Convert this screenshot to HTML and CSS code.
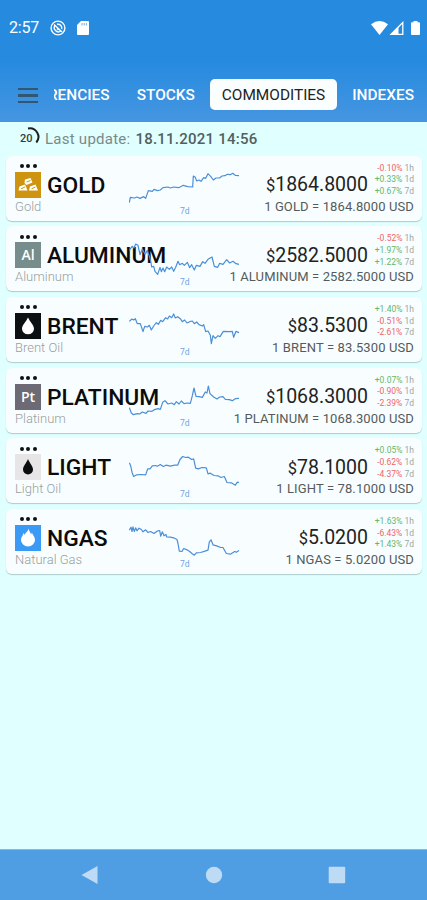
FILE: index.html
```html
<!DOCTYPE html>
<html lang="en">
<head>
    <meta charset="UTF-8">
    <meta name="viewport" content="width=device-width, initial-scale=1.0">
    <title>Commodities</title>
    <link rel="stylesheet" href="styles.css">
</head>
<body>
    <header class="header">
        <div class="status-bar">
            <span class="time">2:57</span>
            <svg class="status-icon" width="16" height="16" viewBox="0 0 16 16" fill="none" stroke="#fff">
                <circle cx="8" cy="8" r="6.9" stroke-width="1.4"/>
                <path d="M5.300 5.300A3.900 3.900 0 0 0 10.800 10.800M7 4.300A3.900 3.900 0 0 1 11.700 9" stroke-width="1.4"/>
                <path d="M4 4.500l8 7.500M7 8.500l1.500 1.500" stroke-width="1.4"/>
            </svg>
            <svg class="sd-icon" width="12" height="14" viewBox="0 0 12 14">
                <path d="M4 0h7a1 1 0 0 1 1 1v12a1 1 0 0 1-1 1H1a1 1 0 0 1-1-1V4z" fill="#fff"/>
                <path d="M5 2v2.5M7.2 2v2.5M9.4 2v2.5" stroke="#6fb0ea" stroke-width="1"/>
            </svg>
            <div class="status-right">
                <svg width="17" height="14" viewBox="0 0 17 14"><path d="M0 3.2Q8.500-3 17 3.200L8.500 14z" fill="#fff"/></svg>
                <svg width="15" height="14" viewBox="0 0 15 14">
                    <path d="M13.800 1.500V13.300H2z" fill="none" stroke="#fff" stroke-width="1.300"/>
                    <path d="M1 14L9.500 5.500V14z" fill="#fff"/>
                </svg>
                <svg class="battery" width="9" height="14" viewBox="0 0 9 14"><path d="M2.500 1.200V0h4v1.200H8a1 1 0 0 1 1 1V13a1 1 0 0 1-1 1H1a1 1 0 0 1-1-1V2.200a1 1 0 0 1 1-1z" fill="#fff"/></svg>
            </div>
        </div>
        <nav class="toolbar">
            <button class="menu-btn" aria-label="Menu"><span></span><span></span><span></span></button>
            <div class="tabs">
                <a class="tab">CURRENCIES</a>
                <a class="tab">STOCKS</a>
                <a class="tab is-active">COMMODITIES</a>
                <a class="tab">INDEXES</a>
            </div>
        </nav>
    </header>

    <main class="content">
        <div class="update">
            <div class="timer">
                <span>20</span>
                <svg width="20" height="20" viewBox="0 0 20 20"><path d="M7 1.500A8.600 8.600 0 0 1 15.300 15.500" fill="none" stroke="#1c2222" stroke-width="2"/></svg>
            </div>
            <span class="update-label">Last update:</span>
            <span class="update-date">18.11.2021 14:56</span>
        </div>

        <section class="list">
            <article class="card">
                <div class="asset">
                    <div class="dots"><i></i><i></i><i></i></div>
                    <div class="asset-row">
                        <svg class="logo" viewBox="0 0 26 26">
                            <path d="M0 0h26v26H0z" fill="#cf940f"/>
                            <g fill="#fff"><path d="M10 7.500l5.500-1.500 2 4.500-6 2.500-2-2zM4.500 14.500l5.500-2 2.500 6h-9zM15 14.500l5.500-2 2.500 6h-9z"/></g>
                            <path d="M11.500 10l4-1.500M6 16.800l4-1.800M16.500 16.800l4-1.800" stroke="#cf940f"/>
                        </svg>
                        <h2>GOLD</h2>
                    </div>
                    <p>Gold</p>
                </div>
                <div class="chart">
                    <svg viewBox="27 0 333 138"><polyline points="28,128 31,112 44,114 51,111 60,115 71,110 77,115 85,92 97,94 102,88 112,92 121,90 129,83 144,81 151,84 161,81 176,83 190,76 203,80 218,81 220,48 226,52 230,63 237,60 243,64 251,53 257,55 264,41 272,49 280,60 288,54 299,54 306,48 315,47 322,43 331,44 338,40 346,46 357,47"/></svg>
                    <span>7d</span>
                </div>
                <div class="quote">
                    <div class="price"><small>$</small>1864.8000</div>
                    <ul class="changes">
                        <li><b class="down">-0.10%</b> 1h</li>
                        <li><b class="up">+0.33%</b> 1d</li>
                        <li><b class="up">+0.67%</b> 7d</li>
                    </ul>
                    <div class="rate">1 GOLD = 1864.8000 USD</div>
                </div>
            </article>

            <article class="card">
                <div class="asset">
                    <div class="dots"><i></i><i></i><i></i></div>
                    <div class="asset-row">
                        <div class="logo logo-al">Al</div>
                        <h2>ALUMINUM</h2>
                    </div>
                    <p>Aluminum</p>
                </div>
                <div class="chart">
                    <svg viewBox="27 212 333 138"><polyline points="28,270 36,258 42,263 47,251 54,255 60,283 67,266 75,282 82,270 88,288 92,302 95,320 101,318 105,333 113,342 120,321 124,334 129,323 134,334 140,320 148,327 155,320 161,333 167,321 174,303 179,313 187,309 193,315 202,306 209,322 215,313 223,329 229,315 240,318 248,304 255,309 264,297 276,290 283,318 293,321 299,309 309,312 320,298 329,308 339,303 348,310 357,312"/></svg>
                    <span>7d</span>
                </div>
                <div class="quote">
                    <div class="price"><small>$</small>2582.5000</div>
                    <ul class="changes">
                        <li><b class="down">-0.52%</b> 1h</li>
                        <li><b class="up">+1.97%</b> 1d</li>
                        <li><b class="up">+1.22%</b> 7d</li>
                    </ul>
                    <div class="rate">1 ALUMINUM = 2582.5000 USD</div>
                </div>
            </article>

            <article class="card">
                <div class="asset">
                    <div class="dots"><i></i><i></i><i></i></div>
                    <div class="asset-row">
                        <svg class="logo" viewBox="0 0 26 26">
                            <path d="M0 0h26v26H0z" fill="#0b1013"/>
                            <path d="M13 4.500C11 9 7 12 7 15.800a6 5.500 0 0 0 12 0C19 12 15 9 13 4.500z" fill="#fff"/>
                        </svg>
                        <h2>BRENT</h2>
                    </div>
                    <p>Brent Oil</p>
                </div>
                <div class="chart">
                    <svg viewBox="27 4 333 138"><polyline points="28,65 36,58 41,61 46,57 52,72 61,72 69,96 74,80 82,82 88,77 94,91 101,79 109,69 115,74 122,62 128,66 137,54 143,58 148,49 155,54 161,43 166,55 173,51 181,57 187,66 194,61 201,70 209,66 217,64 223,72 230,67 237,75 247,79 251,75 257,96 264,94 271,107 274,132 279,108 286,116 294,108 300,111 310,95 330,96 337,95 341,113 348,95 357,99"/></svg>
                    <span>7d</span>
                </div>
                <div class="quote">
                    <div class="price"><small>$</small>83.5300</div>
                    <ul class="changes">
                        <li><b class="up">+1.40%</b> 1h</li>
                        <li><b class="down">-0.51%</b> 1d</li>
                        <li><b class="down">-2.61%</b> 7d</li>
                    </ul>
                    <div class="rate">1 BRENT = 83.5300 USD</div>
                </div>
            </article>

            <article class="card">
                <div class="asset">
                    <div class="dots"><i></i><i></i><i></i></div>
                    <div class="asset-row">
                        <div class="logo logo-pt">Pt</div>
                        <h2>PLATINUM</h2>
                    </div>
                    <p>Platinum</p>
                </div>
                <div class="chart">
                    <svg viewBox="27 216 333 138"><polyline points="28,323 34,339 40,344 52,341 59,342 67,336 78,340 84,333 96,334 103,329 114,326 121,328 128,307 135,302 144,312 155,309 163,314 169,305 177,312 184,303 192,311 202,309 211,310 217,287 222,264 228,289 237,290 247,292 256,276 261,279 265,258 270,281 281,291 291,297 299,291 309,290 316,298 328,299 337,302 346,296 357,295"/></svg>
                    <span>7d</span>
                </div>
                <div class="quote">
                    <div class="price"><small>$</small>1068.3000</div>
                    <ul class="changes">
                        <li><b class="up">+0.07%</b> 1h</li>
                        <li><b class="down">-0.90%</b> 1d</li>
                        <li><b class="down">-2.39%</b> 7d</li>
                    </ul>
                    <div class="rate">1 PLATINUM = 1068.3000 USD</div>
                </div>
            </article>

            <article class="card">
                <div class="asset">
                    <div class="dots"><i></i><i></i><i></i></div>
                    <div class="asset-row">
                        <svg class="logo" viewBox="0 0 26 26">
                            <path d="M0 0h26v26H0z" fill="#e7e5e6"/>
                            <path d="M13 5C11.500 9 8 12 8 15.500a5 5 0 0 0 10 0C18 12 14.500 9 13 5z" fill="#0b0d0e"/>
                        </svg>
                        <h2>LIGHT</h2>
                    </div>
                    <p>Light Oil</p>
                </div>
                <div class="chart">
                    <svg viewBox="27 2.500 333 138"><polyline points="28,62 32,71 36,90 41,103 50,98 63,97 77,98 83,80 90,80 97,71 106,70 112,72 121,67 130,73 138,69 151,72 164,69 173,69 180,52 188,43 197,46 205,45 215,52 221,50 227,78 235,80 246,76 259,77 264,95 271,93 282,100 294,101 303,106 313,103 321,121 334,122 346,129 352,120 357,121"/></svg>
                    <span>7d</span>
                </div>
                <div class="quote">
                    <div class="price"><small>$</small>78.1000</div>
                    <ul class="changes">
                        <li><b class="up">+0.05%</b> 1h</li>
                        <li><b class="down">-0.62%</b> 1d</li>
                        <li><b class="down">-4.37%</b> 7d</li>
                    </ul>
                    <div class="rate">1 LIGHT = 78.1000 USD</div>
                </div>
            </article>

            <article class="card">
                <div class="asset">
                    <div class="dots"><i></i><i></i><i></i></div>
                    <div class="asset-row">
                        <svg class="logo" viewBox="0 0 26 26">
                            <path d="M0 0h26v26H0z" fill="#3a9af5"/>
                            <path d="M13.500 3.500c.5 3 2 3.500 2.500 6l1-2c.5 2.500 3 4 3 7.500a7 6.500 0 0 1-14 0c0-3 2-4 2.500-7l1.200 2C10 7.500 13 7 13.500 3.500z" fill="#fff"/>
                        </svg>
                        <h2>NGAS</h2>
                    </div>
                    <p>Natural Gas</p>
                </div>
                <div class="chart">
                    <svg viewBox="27 214.500 333 138"><polyline points="28,266 33,257 36,270 39,256 43,270 47,259 51,268 57,260 64,264 69,271 77,265 84,273 92,270 102,276 111,269 119,267 122,284 127,271 132,283 138,279 140,286 151,287 161,289 171,294 174,306 178,329 186,330 191,321 201,325 209,330 216,336 223,341 229,334 242,333 255,329 264,326 268,301 273,295 279,310 290,313 302,318 309,318 319,336 331,338 344,330 349,332 357,327"/></svg>
                    <span>7d</span>
                </div>
                <div class="quote">
                    <div class="price"><small>$</small>5.0200</div>
                    <ul class="changes">
                        <li><b class="up">+1.63%</b> 1h</li>
                        <li><b class="down">-6.43%</b> 1d</li>
                        <li><b class="up">+1.43%</b> 7d</li>
                    </ul>
                    <div class="rate">1 NGAS = 5.0200 USD</div>
                </div>
            </article>
        </section>
    </main>

    <footer class="nav-bar">
        <svg width="18" height="18" viewBox="0 0 18 18"><path d="M.500 9L16.500 0v18z"/></svg>
        <svg width="18" height="18" viewBox="0 0 18 18"><circle cx="9" cy="9" r="8.200"/></svg>
        <svg width="18" height="18" viewBox="0 0 18 18"><rect x=".7" y=".7" width="16.500" height="16.500" rx="1"/></svg>
    </footer>
</body>
</html>
```

FILE: styles.css
```css
*,
*:before,
*:after {
    box-sizing: border-box;
}

body {
    margin: 0;
    height: 900px;
    display: flex;
    flex-direction: column;
    overflow: hidden;
    background-color: #e0ffff;
    font-family: Roboto, sans-serif;
}

svg {
    display: block;
}

.header {
    height: 122px;
    background: linear-gradient(#268adf 0, #268adf 60px, #4596e1 122px);
    color: #fff;
}

.status-bar {
    height: 41px;
    padding: 14px 7px 0 9px;
    display: flex;
    align-items: center;
}

.time {
    width: 41px;
    font-size: 16px;
    letter-spacing: -0.2px;
}

.sd-icon {
    margin-left: 11px;
}

.status-right {
    margin-left: auto;
    display: flex;
    gap: 1px;
}

.battery {
    margin-left: 6px;
}

.toolbar {
    margin-top: 38px;
    height: 31px;
    display: flex;
    align-items: center;
}

.menu-btn {
    width: 54px;
    padding: 2px 16px 0 18px;
    border: 0;
    background: none;
    display: flex;
    flex-direction: column;
    gap: 4px;
}

.menu-btn span {
    width: 100%;
    height: 2.5px;
    background-color: #35566f;
}

.tabs {
    flex: 1;
    display: flex;
    justify-content: flex-end;
    overflow: hidden;
    padding-right: 1px;
}

.tab {
    height: 31px;
    padding: 0 12px;
    margin-left: 3px;
    border-radius: 5px;
    font-size: 15.4px;
    font-weight: 500;
    line-height: 32px;
    white-space: nowrap;
}

.tab.is-active {
    background-color: #fafeff;
    color: #222;
    font-weight: 400;
}

.content {
    flex: 1;
}

.update {
    height: 33.5px;
    padding-left: 20px;
    display: flex;
    align-items: center;
    font-size: 15px;
    color: #7b8989;
}

.timer {
    width: 25px;
    display: grid;
    font-size: 11px;
    font-weight: 500;
    color: #353c3c;
}

.timer > * {
    grid-area: 1 / 1;
    align-self: center;
}

.timer svg {
    margin-top: -4px;
    margin-left: 1px;
}

.update-label {
    letter-spacing: 0.25px;
    margin-right: 5px;
}

.update-date {
    color: #526060;
    font-weight: 500;
    letter-spacing: 0.23px;
}

.list {
    padding: 0 5px 0 6px;
    display: grid;
    gap: 5.7px;
}

.card {
    position: relative;
    height: 65px;
    padding: 8px 8px 0 9px;
    display: flex;
    justify-content: space-between;
    border-radius: 6px;
    background-color: #f8feff;
    box-shadow: 0 1px 1px rgba(80, 110, 110, 0.35);
}

.dots {
    height: 8px;
    padding: 0.5px 0 0 4.5px;
    display: flex;
    gap: 2.7px;
}

.dots i {
    width: 4px;
    height: 4px;
    border-radius: 50%;
    background-color: #111;
}

.asset-row {
    display: flex;
    align-items: center;
    gap: 6px;
    height: 26px;
}

.logo {
    width: 26px;
    height: 26px;
    color: #fff;
    font-family: "Open Sans", sans-serif;
    font-size: 14px;
    font-weight: 600;
    line-height: 26px;
    text-align: center;
}

.logo-al {
    background-color: #768d8b;
}

.logo-pt {
    background-color: #6c6a74;
}

.asset h2 {
    margin: 2.4px 0 0;
    color: #0c0c0c;
    font-size: 22.8px;
    font-weight: 500;
    line-height: 26px;
}

.asset p {
    margin: 0;
    color: #989f9f;
    font-size: 13px;
    font-weight: 300;
    line-height: 17px;
}

/* the chart runs over the end of long names */
.chart {
    position: absolute;
    left: 123px;
    top: 4.5px;
    width: 111px;
}

.chart svg {
    width: 111px;
    height: 46px;
}

.chart polyline {
    fill: none;
    stroke: #4b8fd8;
    stroke-width: 3.6;
    stroke-linejoin: round;
}

.chart span {
    position: absolute;
    left: 51px;
    top: 45px;
    color: #6fa3e4;
    font-size: 8.5px;
    line-height: 12px;
}

.quote {
    display: grid;
    grid-template-columns: auto 46px;
    grid-template-rows: 34px 17px;
}

.price {
    align-self: end;
    margin-bottom: -2.4px;
    color: #222;
    font-size: 19.5px;
    line-height: 28px;
    text-align: right;
    white-space: nowrap;
}

.price small {
    font-size: 16.5px;
}

.changes {
    margin: -1px 0 0;
    padding: 0;
    list-style: none;
    color: #9da5a5;
    font-size: 8.5px;
    line-height: 11.7px;
    text-align: right;
    white-space: nowrap;
}

.changes b {
    font-weight: 400;
}

.up {
    color: #66b56a;
}

.down {
    color: #f06368;
}

.rate {
    grid-column: 1 / 3;
    color: #555b5b;
    font-size: 13px;
    letter-spacing: 0.12px;
    line-height: 17px;
    text-align: right;
    white-space: nowrap;
}

.nav-bar {
    height: 51px;
    padding: 0 81px;
    display: flex;
    align-items: center;
    justify-content: space-between;
    border-top: 1px solid #7cbcec;
    background-color: #4f9ee4;
}

.nav-bar svg {
    fill: #bddbf5;
}
```
